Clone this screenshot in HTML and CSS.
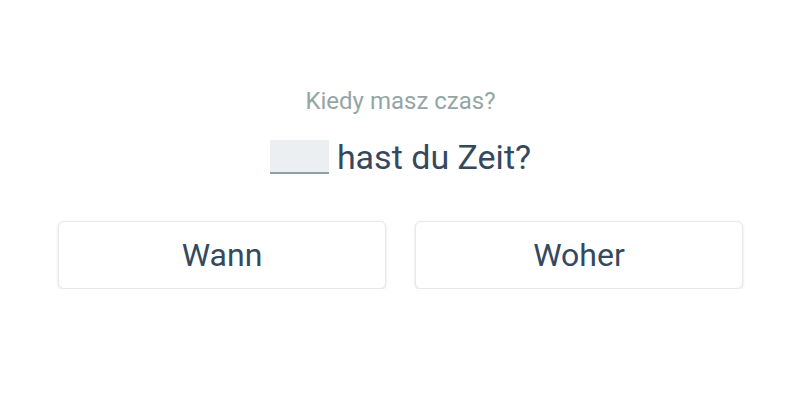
FILE: index.html
```html
<!DOCTYPE html>
<html>
<head>
<meta charset="utf-8">
<link rel="stylesheet" href="styles.css">
</head>
<body>
<div class="quiz">
  <div class="hint">Kiedy masz czas?</div>
  <div class="sentence"><span class="blank"></span> hast du Zeit?</div>
  <div class="options">
    <button class="option">Wann</button>
    <button class="option">Woher</button>
  </div>
</div>
</body>
</html>
```
FILE: styles.css
```css
html, body {
  margin: 0;
  padding: 0;
  background: #ffffff;
}
body {
  font-family: Roboto, "Noto Sans", sans-serif;
  color: #34495e;
}
.quiz {
  padding: 86px 57px 0 58px;
  display: flex;
  flex-direction: column;
  align-items: center;
}
.hint {
  font-size: 24px;
  line-height: 30px;
  color: #95a5a6;
}
.sentence {
  margin-top: 21px;
  font-size: 34px;
  line-height: 40px;
  display: flex;
  align-items: center;
  gap: 8px;
}
.blank {
  display: inline-block;
  width: 59px;
  height: 32px;
  background: #eceff1;
  border-bottom: 2px solid #8fa0a6;
}
.options {
  margin-top: 44px;
  width: 100%;
  display: grid;
  grid-template-columns: 1fr 1fr;
  gap: 29px;
}
.option {
  height: 68px;
  background: #ffffff;
  border: 1px solid #e6e8ea;
  border-radius: 6px;
  box-shadow: 0 1px 3px rgba(0, 0, 0, 0.12);
  font-family: Roboto, "Noto Sans", sans-serif;
  font-size: 32px;
  color: #34495e;
  padding: 0;
}
```
